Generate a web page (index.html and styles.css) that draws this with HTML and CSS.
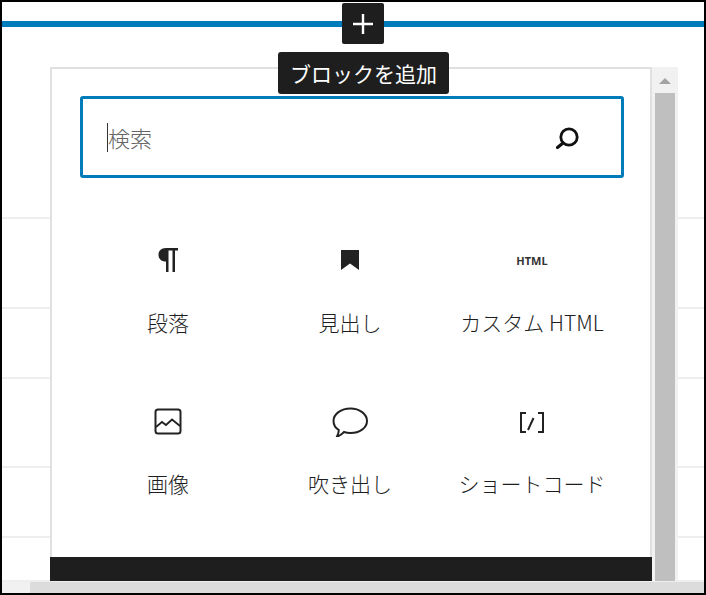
FILE: index.html
```html
<!DOCTYPE html>
<html lang="ja">
<head>
  <meta charset="UTF-8">
  <meta name="viewport" content="width=device-width, initial-scale=1.0">
  <title>ブロックを追加</title>
  <link rel="stylesheet" href="styles.css">
</head>
<body>
  <div class="frame">
    <div class="editor">
      <div class="insert-line"></div>
      <div class="row row-1"></div>
      <div class="row row-2"></div>
      <div class="row row-3"></div>
      <div class="row row-4"></div>
      <div class="row row-5"></div>
    </div>
    <div class="page-scroll"><div class="page-scroll-end"></div></div>

    <button class="add-button" aria-label="ブロックを追加">
      <svg width="24" height="24" viewBox="0 0 24 24"><path d="M12 2v20M2 12h20" stroke="#fff" stroke-width="2.4" fill="none"/></svg>
    </button>
    <div class="tooltip">ブロックを追加</div>

    <div class="inserter">
      <div class="inserter-main">
        <div class="search">
          <span class="caret"></span>
          <span class="placeholder">検索</span>
          <svg width="28" height="28" viewBox="0 0 28 28">
            <circle cx="17" cy="14" r="8.200" stroke="#111" stroke-width="2.800" fill="none"/>
            <path d="M11 20L5.500 24.500" stroke="#111" stroke-width="3.200" stroke-linecap="round"/>
          </svg>
        </div>
        <div class="blocks">
          <div class="block">
            <div class="block-icon">
              <svg width="28" height="28" viewBox="0 0 28 28"><path d="M12 26V15.500C7 15.500 4.500 12.500 4.500 8.700 4.500 5 7 2 12 2H24V4.500H21V26H18.500V4.500H14.500V26Z" fill="#222"/></svg>
            </div>
            <div class="block-label">段落</div>
          </div>
          <div class="block">
            <div class="block-icon">
              <svg width="28" height="28" viewBox="0 0 28 28"><path d="M5 4H23V24L14 17.500 5 24Z" fill="#222"/></svg>
            </div>
            <div class="block-label">見出し</div>
          </div>
          <div class="block">
            <div class="block-icon"><span class="html-icon">HTML</span></div>
            <div class="block-label">カスタム HTML</div>
          </div>
          <div class="block">
            <div class="block-icon">
              <svg width="30" height="30" viewBox="0 -1.500 30 30">
                <rect x="2.500" y="2" width="25" height="24" rx="2.500" stroke="#222" stroke-width="2" fill="none"/>
                <path d="M3 19.500L9 14.500 13 17.500 19 12 27 18.500" stroke="#222" stroke-width="1.800" fill="none"/>
              </svg>
            </div>
            <div class="block-label">画像</div>
          </div>
          <div class="block">
            <div class="block-icon">
              <svg width="38" height="32" viewBox="0 -1.500 38 32">
                <path d="M19.500 2C28.500 2 36 7.500 36 14.500S28.500 26.500 19.500 26.500C17 26.500 15 26.200 13 25.500 11 27.500 9 29.500 6 30 7 28 7.800 26 7.800 23.500 4.500 21.500 2.500 18 2.500 14.500 2.500 7.500 10 2 19.500 2Z" stroke="#222" stroke-width="2" fill="none"/>
              </svg>
            </div>
            <div class="block-label">吹き出し</div>
          </div>
          <div class="block">
            <div class="block-icon">
              <svg width="28" height="28" viewBox="0 -1.500 28 28">
                <path d="M8 4.500H3V23.500H8M20 4.500H25V23.500H20M10 21.500L15.500 9.500" stroke="#222" stroke-width="2" fill="none"/>
              </svg>
            </div>
            <div class="block-label">ショートコード</div>
          </div>
        </div>
        <div class="tips"></div>
      </div>
      <div class="scrollbar">
        <div class="scroll-arrow"></div>
        <div class="scroll-thumb"></div>
      </div>
    </div>
  </div>
</body>
</html>
```

FILE: styles.css
```css
html, body {
  margin: 0;
  padding: 0;
}

body {
  width: 706px;
  height: 595px;
  overflow: hidden;
  background-color: #000;
  font-family: "Noto Sans CJK JP", "Noto Sans", sans-serif;
}

.frame {
  position: relative;
  width: 702px;
  height: 591px;
  margin: 2px 0 0 2px;
  display: flex;
  flex-direction: column;
  background-color: #fff;
}

.editor {
  flex: 1;
  padding-top: 19px;
  border-bottom: 2px solid #eeeeee;
}

.insert-line {
  height: 6px;
  background-color: #007cba;
}

.row {
  border-bottom: 2px solid #eeeeee;
}

.row-1 { height: 190px; }
.row-2 { height: 88px; }
.row-3 { height: 68px; }
.row-4 { height: 87px; }
.row-5 { height: 68px; }

.page-scroll {
  height: 11px;
  background-color: #dcdcdc;
}

.page-scroll-end {
  width: 28px;
  height: 100%;
  background-color: #f1f1f1;
}

.add-button {
  position: absolute;
  left: 340px;
  top: 1px;
  width: 42px;
  height: 41px;
  padding: 0;
  border: none;
  border-radius: 2px;
  background-color: #1e1e1e;
  display: flex;
  align-items: center;
  justify-content: center;
}

.tooltip {
  position: absolute;
  left: 276px;
  top: 50px;
  z-index: 2;
  width: 171px;
  height: 42px;
  border-radius: 3px;
  background-color: #1e1e1e;
  color: #fff;
  font-size: 21px;
  line-height: 42px;
  text-align: center;
  white-space: nowrap;
}

.inserter {
  position: absolute;
  left: 48px;
  top: 65px;
  display: flex;
  height: 514px;
}

.inserter-main {
  box-sizing: border-box;
  width: 602px;
  display: flex;
  flex-direction: column;
  padding-top: 27px;
  background-color: #fff;
  border: solid #e0e0e0;
  border-width: 2px 2px 0 2px;
}

.search {
  box-sizing: border-box;
  flex-shrink: 0;
  width: 544px;
  height: 82px;
  margin-left: 28px;
  display: flex;
  align-items: center;
  padding: 0 41px 0 24px;
  border: 3px solid #007cba;
  border-radius: 3px;
}

.caret {
  width: 1px;
  height: 29px;
  background-color: #333;
}

.placeholder {
  flex: 1;
  font-size: 22px;
  font-weight: 300;
  color: #666;
}

.blocks {
  flex: 1;
  min-height: 0;
  display: grid;
  grid-template-columns: repeat(3, 182px);
  grid-auto-rows: 161px;
  margin-left: 25px;
  padding-top: 59px;
}

.block {
  display: flex;
  flex-direction: column;
  align-items: center;
}

.block-icon {
  height: 46px;
  display: flex;
  align-items: center;
  justify-content: center;
}

.block-label {
  margin-top: 23px;
  font-size: 21px;
  font-weight: 300;
  line-height: 32px;
  color: #1e1e1e;
  white-space: nowrap;
}

.html-icon {
  font-family: "Noto Sans", sans-serif;
  font-size: 11px;
  font-weight: bold;
  color: #333;
}

.tips {
  flex-shrink: 0;
  height: 24px;
  margin: 0 -2px;
  background-color: #1e1e1e;
}

.scrollbar {
  box-sizing: border-box;
  width: 26px;
  padding: 0 3px;
  background-color: #f1f1f1;
  display: flex;
  flex-direction: column;
}

.scroll-arrow {
  position: relative;
  height: 26px;
}

.scroll-arrow::after {
  content: "";
  position: absolute;
  left: 4px;
  top: 11px;
  border-left: 6px solid transparent;
  border-right: 6px solid transparent;
  border-bottom: 6px solid #a3a3a3;
}

.scroll-thumb {
  flex: 1;
  background-color: #bfbfbf;
}
```
